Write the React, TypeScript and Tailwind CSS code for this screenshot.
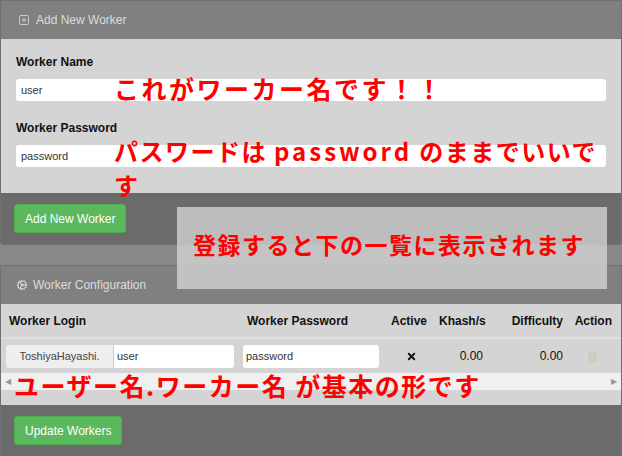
import { Trash2, X, Cog, SquarePlus } from 'lucide-react';

export default function App() {
  return (
    <div className="relative w-[622px] h-[456px] overflow-hidden bg-[#888888] text-[12px] text-[#111]" style={{ fontFamily: '"Liberation Sans", Arial, sans-serif' }}>
      {/* Add New Worker panel */}
      <div className="h-[245px] border border-[#707070] rounded-b-[3px] flex flex-col">
        <div className="h-[38px] bg-[#808080] flex items-center gap-[6px] px-[17px] text-[#dcdcdc] text-[12px]">
          <SquarePlus size={12} strokeWidth={1.5} />
          Add New Worker
        </div>
        <div className="h-[154px] bg-[#d4d4d4] px-[15px] pt-[14px]">
          <div className="font-bold mb-[8px]">Worker Name</div>
          <div className="h-[22px] bg-white rounded-[3px] px-[5px] flex items-center text-[11px] text-[#333]">user</div>
          <div className="font-bold mt-[18px] mb-[8px]">Worker Password</div>
          <div className="h-[22px] bg-white rounded-[3px] px-[5px] flex items-center text-[11px] text-[#333]">password</div>
        </div>
        <div className="flex-1 bg-[#6b6b6b] px-[13px] pt-[11px]">
          <button className="h-[29px] px-[10px] bg-[#5cb85c] border border-[#4cae4c] rounded-[3px] text-white text-[12px]">Add New Worker</button>
        </div>
      </div>

      {/* Worker Configuration panel */}
      <div className="mt-[20px] h-[191px] border border-[#707070] flex flex-col">
        <div className="h-[38px] bg-[#808080] flex items-center gap-[5px] px-[15px] text-[#dcdcdc] text-[12px]">
          <Cog size={12} strokeWidth={2} />
          Worker Configuration
        </div>
        <div className="bg-[#d4d4d4]">
          <div className="h-[35px] flex items-center font-bold border-b-2 border-[#e0e0e0]">
            <div className="w-[245px] pl-[8px]">Worker Login</div>
            <div className="w-[145px] pl-[1px]">Worker Password</div>
            <div className="w-[48px]">Active</div>
            <div className="w-[44px] text-right">Khash/s</div>
            <div className="w-[80px] text-right">Difficulty</div>
            <div className="flex-1 text-right pr-[9px]">Action</div>
          </div>
          <div className="h-[34px] flex items-center">
            <div className="ml-[5px] w-[228px] h-[23px] flex rounded-[3px] overflow-hidden text-[11px]">
              <div className="w-[108px] bg-[#eeeeee] border-r border-[#ccc] flex items-center justify-center text-[#444]">ToshiyaHayashi.</div>
              <div className="flex-1 bg-white flex items-center px-[3px] text-[#333]">user</div>
            </div>
            <div className="ml-[9px] w-[136px] h-[23px] bg-white rounded-[3px] flex items-center px-[3px] text-[11px] text-[#333]">password</div>
            <div className="w-[64px] flex justify-center"><X size={11} strokeWidth={4} /></div>
            <div className="w-[40px] text-right">0.00</div>
            <div className="w-[80px] text-right">0.00</div>
            <div className="flex-1 flex justify-center text-[#d9bf8c]"><Trash2 size={11} /></div>
          </div>
          <div className="h-[17px] bg-[#f0f0f0] flex items-center justify-between px-[4px] text-[#999] text-[8px]">
            <span>◀</span><span>▶</span>
          </div>
          <div className="h-[15px]" />
        </div>
        <div className="flex-1 bg-[#6b6b6b] px-[13px] pt-[11px]">
          <button className="h-[29px] px-[10px] bg-[#5cb85c] border border-[#4cae4c] rounded-[3px] text-white text-[12px]">Update Workers</button>
        </div>
      </div>

      {/* annotations */}
      <div className="absolute left-[177px] top-[207px] w-[430px] h-[82px] bg-[#d8d8d8]/75" />
      <div className="absolute inset-0 pointer-events-none text-[#ff0000] font-bold" style={{ fontFamily: '"Noto Sans CJK JP", sans-serif' }}>
        <div className="absolute left-[114px] top-[71px] text-[25px] leading-[34px] tracking-[2.5px]">これがワーカー名です！！</div>
        <div className="absolute left-[114px] top-[134px] text-[24px] leading-[34px] tracking-[1.5px]">パスワードは <span className="tracking-[3px]">password</span> のままでいいです</div>
        <div className="absolute left-[193px] top-[227px] text-[23px] leading-[34px] tracking-[1.5px]">登録すると下の一覧に表示されます</div>
        <div className="absolute left-[14px] top-[368px] text-[25px] leading-[34px] tracking-[1.5px]">ユーザー名.ワーカー名 が基本の形です</div>
      </div>
    </div>
  );
}
